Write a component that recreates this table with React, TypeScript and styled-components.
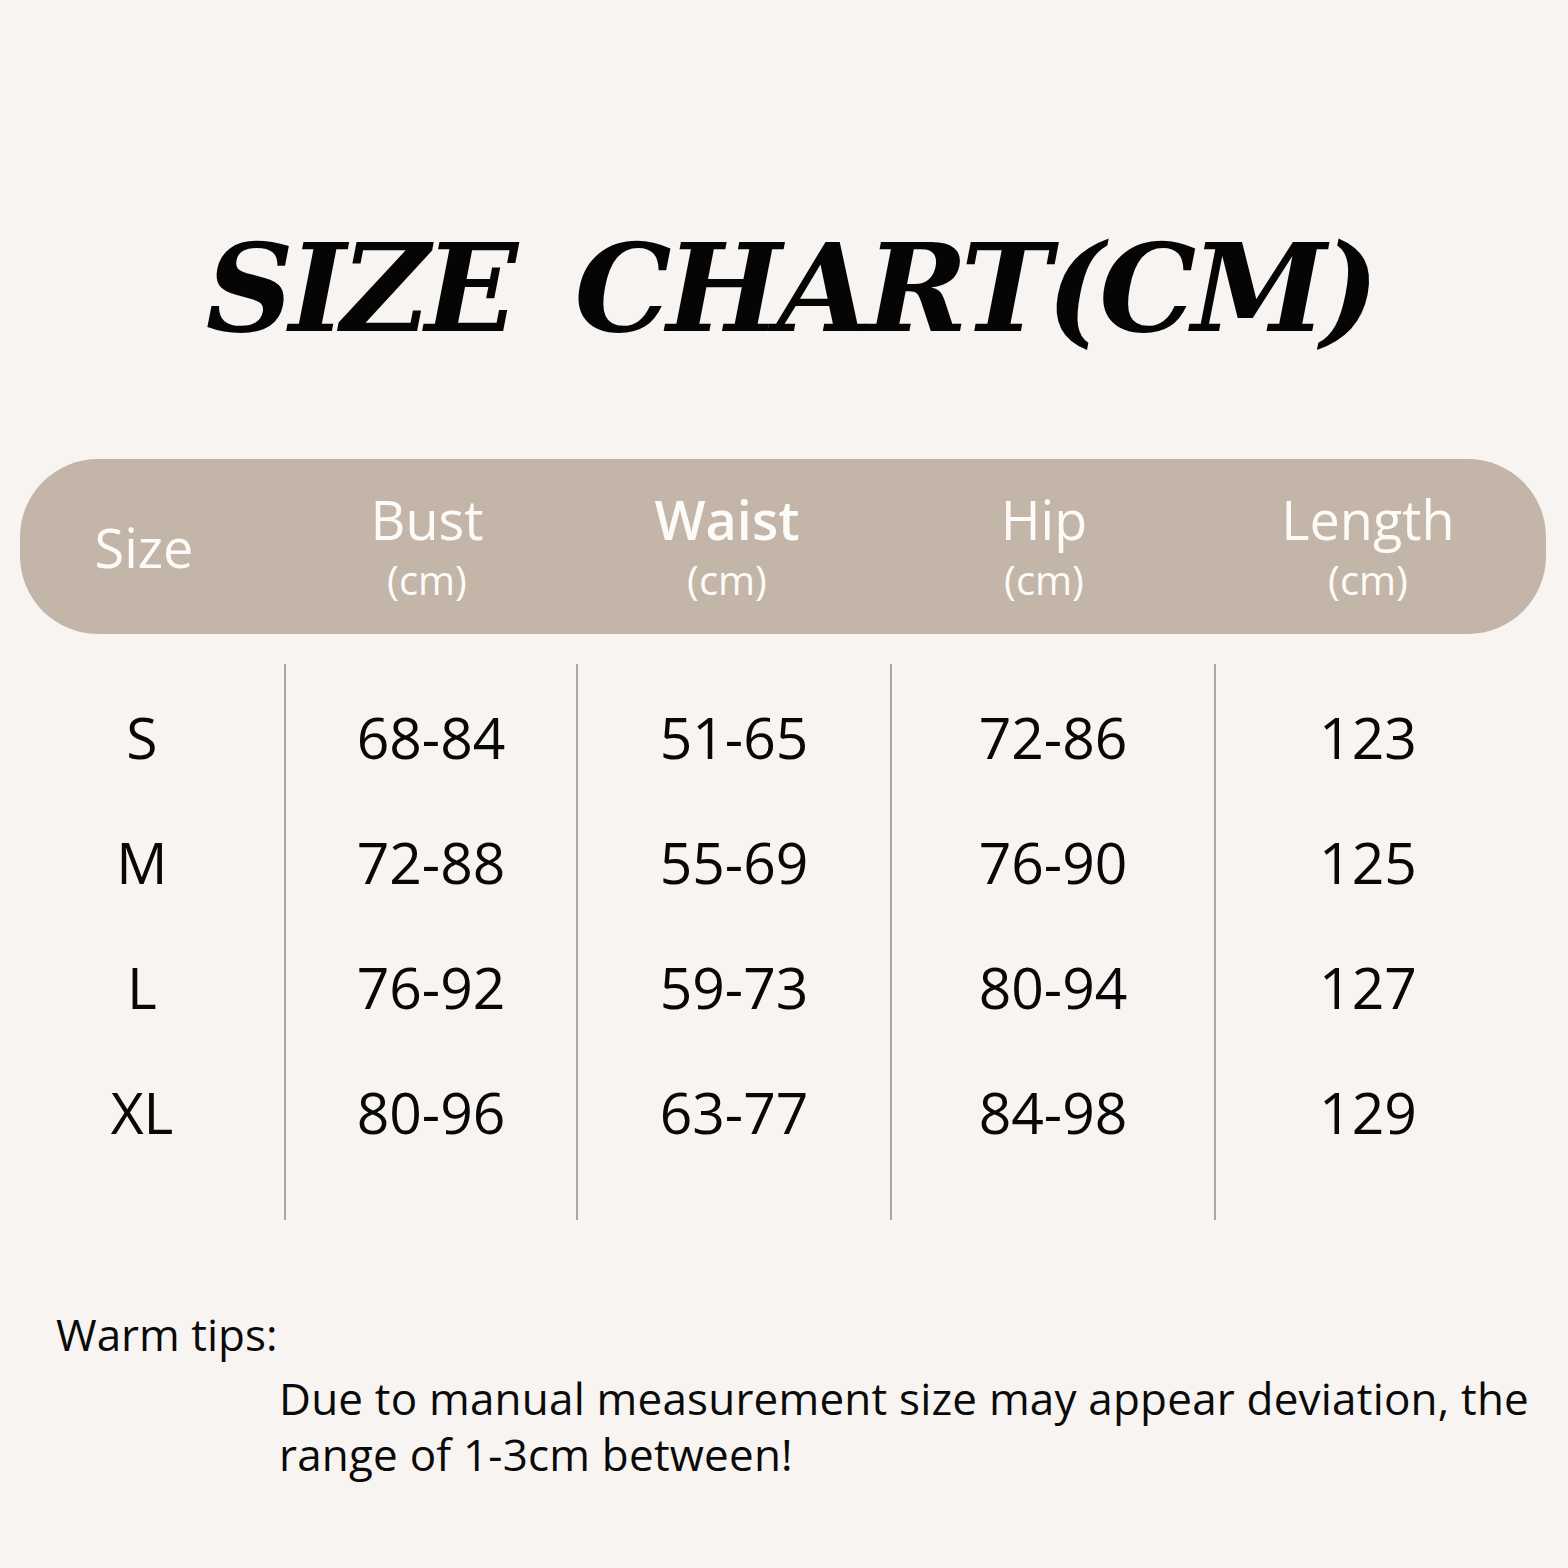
import React from "react";
import styled, { createGlobalStyle } from "styled-components";

const Global = createGlobalStyle`
  html, body { margin: 0; padding: 0; background: #f7f4f1; }
  body { font-family: "Open Sans", "Noto Sans", sans-serif; color: #0a0a0a; }
`;

const Page = styled.div`
  width: 1568px;
  height: 1568px;
  background: #f7f4f1;
  display: flex;
  flex-direction: column;
  overflow: hidden;
`;

const Title = styled.h1`
  margin: 218px 0 0 0;
  height: 140px;
  font-family: "DejaVu Serif", "Liberation Serif", serif;
  font-weight: 700;
  font-style: italic;
  font-size: 122px;
  line-height: 140px;
  text-align: center;
  letter-spacing: -5px;
  word-spacing: 24px;
  color: #050505;
  padding-left: 12px;
`;

const HeaderPill = styled.div`
  margin: 101px 22px 0 20px;
  height: 175px;
  border-radius: 78px;
  background: #c4b5a9;
  display: grid;
  grid-template-columns: 248px 318px 282px 352px 296px;
  align-items: center;
`;

const HeadCell = styled.div`
  display: flex;
  flex-direction: column;
  align-items: center;
  color: #fdfbf8;
  line-height: 1;
`;

const HeadName = styled.span<{ $bold?: boolean }>`
  font-size: 54px;
  line-height: 62px;
  font-weight: ${(p) => (p.$bold ? 600 : 400)};
`;

const HeadUnit = styled.span`
  font-size: 40px;
  line-height: 52px;
  margin-top: 4px;
`;

const Body = styled.div`
  margin-top: 30px;
  display: grid;
  grid-template-columns: 284px 292px 314px 324px 306px;
  height: 556px;
`;

const Column = styled.div<{ $divider?: boolean }>`
  display: flex;
  flex-direction: column;
  align-items: center;
  padding-top: 38px;
  border-left: ${(p) => (p.$divider ? "2px solid #a9a7a5" : "none")};
`;

const Cell = styled.div`
  height: 125px;
  font-size: 57px;
  line-height: 70px;
  color: #080808;
`;

const Tips = styled.div`
  margin-top: 86px;
  padding-left: 56px;
  font-size: 44px;
  line-height: 56px;
  color: #0a0a0a;
`;

const TipsText = styled.p`
  margin: 8px 0 0 223px;
  width: 1280px;
  letter-spacing: 0.2px;
`;

const headers = [
  { name: "Size" },
  { name: "Bust", unit: "(cm)" },
  { name: "Waist", unit: "(cm)", bold: true },
  { name: "Hip", unit: "(cm)" },
  { name: "Length", unit: "(cm)" },
];

const columns = [
  ["S", "M", "L", "XL"],
  ["68-84", "72-88", "76-92", "80-96"],
  ["51-65", "55-69", "59-73", "63-77"],
  ["72-86", "76-90", "80-94", "84-98"],
  ["123", "125", "127", "129"],
];

export default function App() {
  return (
    <Page>
      <Global />
      <Title>SIZE CHART(CM)</Title>
      <HeaderPill>
        {headers.map((h) => (
          <HeadCell key={h.name}>
            <HeadName $bold={h.bold}>{h.name}</HeadName>
            {h.unit && <HeadUnit>{h.unit}</HeadUnit>}
          </HeadCell>
        ))}
      </HeaderPill>
      <Body>
        {columns.map((col, i) => (
          <Column key={i} $divider={i > 0}>
            {col.map((v) => (
              <Cell key={v}>{v}</Cell>
            ))}
          </Column>
        ))}
      </Body>
      <Tips>
        Warm tips:
        <TipsText>
          Due to manual measurement size may appear deviation, the range of 1-3cm between!
        </TipsText>
      </Tips>
    </Page>
  );
}
